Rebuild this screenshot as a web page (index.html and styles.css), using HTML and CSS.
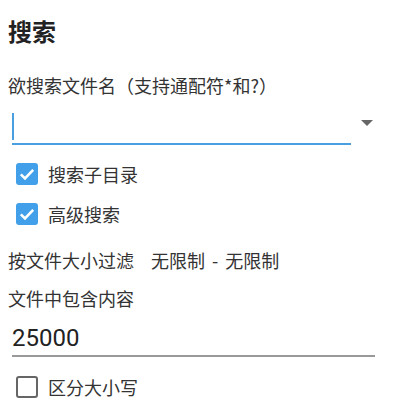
FILE: index.html
```html
<!DOCTYPE html>
<html lang="zh-CN">
<head>
<meta charset="utf-8">
<title>搜索</title>
<link rel="stylesheet" href="styles.css">
</head>
<body>
<div class="page">
  <div class="title">搜索</div>
  <div class="label label-first">欲搜索文件名（支持通配符*和?）</div>
  <div class="combo">
    <div class="input focused"><span class="caret"></span></div>
    <svg class="arrow" width="12" height="6" viewBox="0 0 12 6"><path d="M0 0H12L6 6Z" fill="#666"/></svg>
  </div>
  <div class="check-row first-check">
    <span class="box checked"><svg width="22" height="22" viewBox="0 0 22 22"><path d="M4.8 11.3l4.2 4.2 8.2-8.7" fill="none" stroke="#fff" stroke-width="2.6"/></svg></span>
    <span class="check-text">搜索子目录</span>
  </div>
  <div class="check-row">
    <span class="box checked"><svg width="22" height="22" viewBox="0 0 22 22"><path d="M4.8 11.3l4.2 4.2 8.2-8.7" fill="none" stroke="#fff" stroke-width="2.6"/></svg></span>
    <span class="check-text">高级搜索</span>
  </div>
  <div class="label size-filter">按文件大小过滤<span class="range">无限制<span class="dash">-</span>无限制</span></div>
  <div class="label content-label">文件中包含内容</div>
  <div class="input number-input">25000</div>
  <div class="check-row last-check">
    <span class="box empty"></span>
    <span class="check-text">区分大小写</span>
  </div>
</div>
</body>
</html>
```

FILE: styles.css
```css
html, body {
  margin: 0;
  padding: 0;
  background: #fff;
}
body {
  font-family: "Noto Sans CJK SC", "Noto Sans", sans-serif;
  color: #333;
}
.page {
  display: flex;
  flex-direction: column;
  align-items: flex-start;
  padding: 15px 8px 0 8px;
}
.title {
  font-size: 24px;
  font-weight: bold;
  line-height: 32px;
  color: #222;
}
.label {
  font-size: 18px;
  line-height: 24px;
}
.label-first {
  margin-top: 26px;
}
.combo {
  display: flex;
  align-items: center;
  margin-top: 10px;
  margin-left: 4px;
}
.input {
  box-sizing: border-box;
  height: 38px;
  border-bottom: 2px solid #999;
}
.input.focused {
  width: 339px;
  border-bottom-color: #4a9fe0;
  display: flex;
  align-items: center;
}
.caret {
  display: block;
  width: 2px;
  height: 27px;
  margin-top: 2px;
  background: #4a9fe0;
}
.arrow {
  margin-left: 10px;
  margin-top: -6px;
}
.check-row {
  display: flex;
  align-items: center;
  height: 40px;
  margin-left: 8px;
}
.first-check {
  margin-top: 9px;
}
.last-check {
  margin-top: 10px;
}
.box {
  box-sizing: border-box;
  width: 22px;
  height: 22px;
  border-radius: 3px;
  display: flex;
}
.box.checked {
  background: #42a0ea;
}
.box.empty {
  border: 2px solid #666;
}
.check-text {
  font-size: 18px;
  line-height: 24px;
  margin-left: 10px;
}
.size-filter {
  margin-top: 14px;
}
.range {
  margin-left: 17px;
}
.dash {
  padding: 0 7px;
}
.content-label {
  margin-top: 14px;
}
.number-input {
  width: 363px;
  margin-left: 4px;
  margin-top: 9px;
  font-family: Roboto, "Noto Sans", sans-serif;
  font-size: 24px;
  line-height: 34px;
  height: 38px;
  padding-top: 2px;
  color: #222;
}
```
